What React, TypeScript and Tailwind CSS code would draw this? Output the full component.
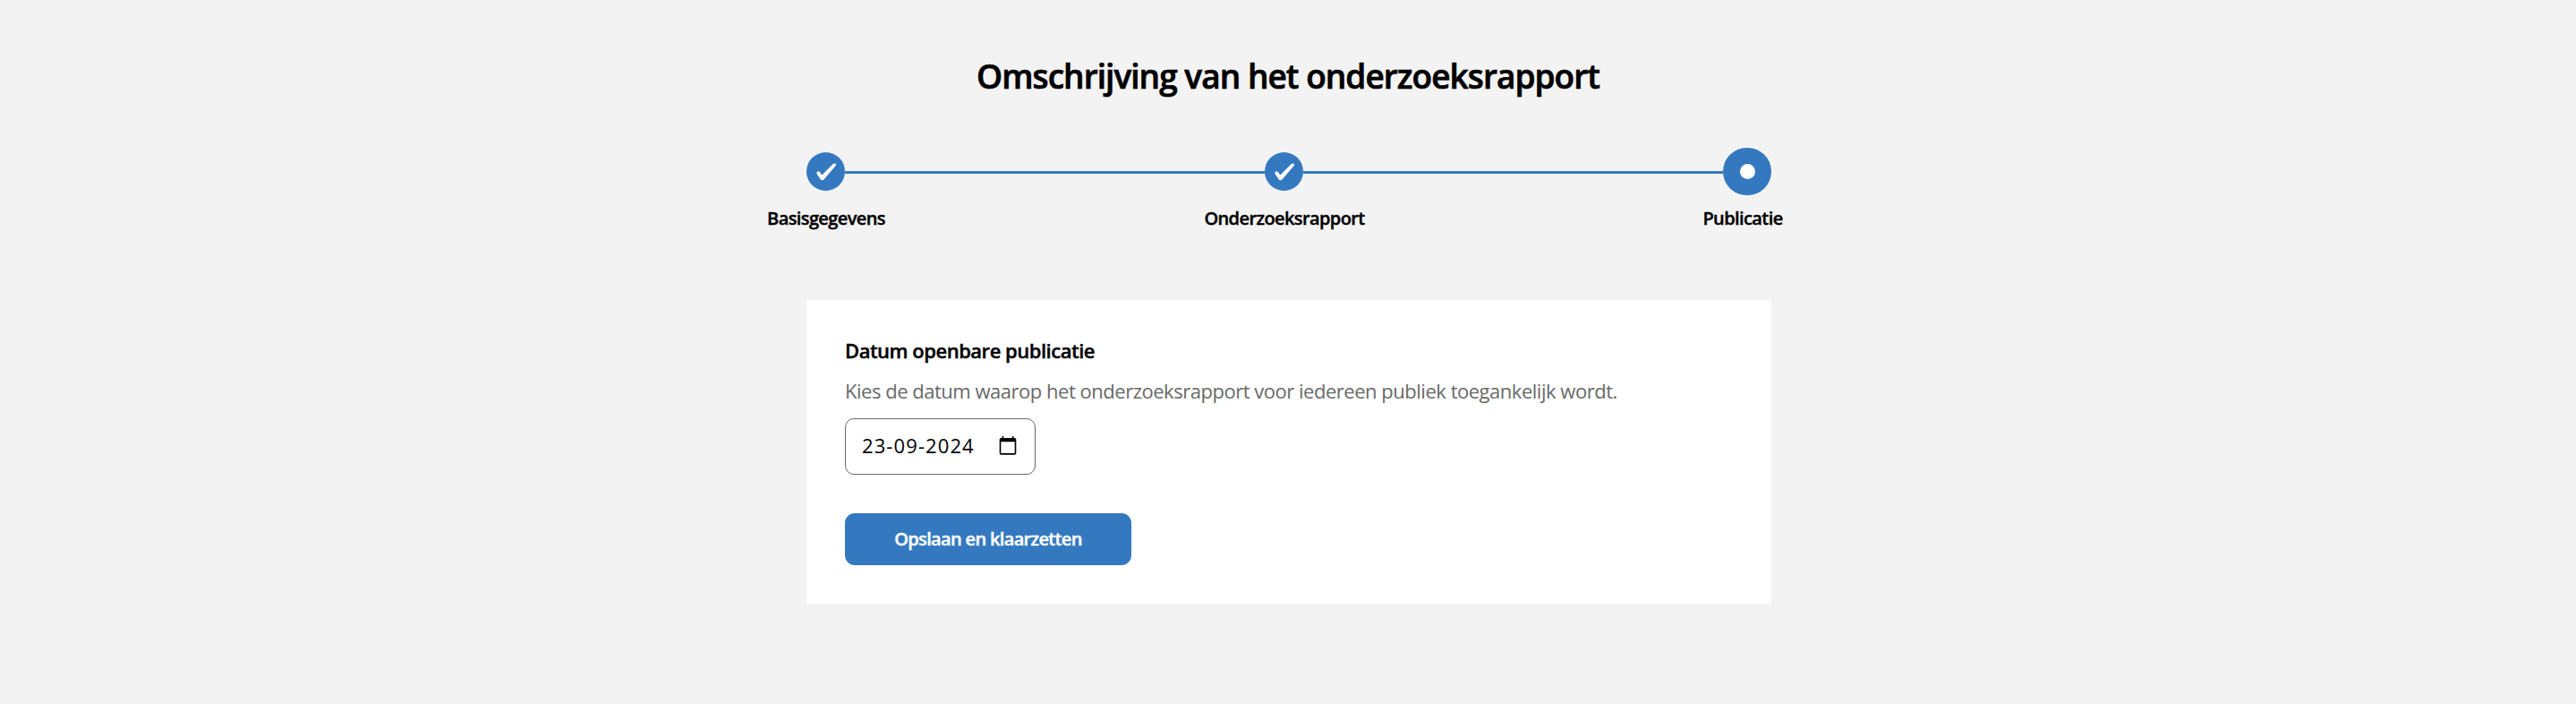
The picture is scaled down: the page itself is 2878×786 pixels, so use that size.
function Check() {
  return (
    <span className="flex h-[43px] w-[43px] shrink-0 items-center justify-center rounded-full bg-[#3479c0]">
      <svg viewBox="0 0 43 43" className="h-[43px] w-[43px]">
        <path d="M11.600 22.200Q13 20.600 14.800 22L17.300 25.500L29.800 13Q31.500 11.900 32.900 12.900Q33.500 13.800 32.400 15.200L19.600 30.200Q17.300 32.400 15.600 30.200L11.700 24.200Q11 23 11.600 22.200Z" fill="#fff" />
      </svg>
    </span>
  );
}

function Line() {
  return <span className="mt-0.5 h-[3px] flex-1 bg-[#3479c0]" />;
}

export default function App() {
  return (
    <main className="flex h-[786px] w-full flex-col items-center bg-[#f3f3f3] font-['Open_Sans',sans-serif] text-black">
      <h1 className="mt-[59px] h-[52px] text-[37px] leading-[52px] font-semibold tracking-[-0.95px] whitespace-nowrap [-webkit-text-stroke:0.7px_currentColor]">
        Omschrijving van het onderzoeksrapport
      </h1>

      <div className="mt-[54px] ml-0.5 flex h-[53px] w-[1078px] items-center">
        <Check />
        <Line />
        <Check />
        <Line />
        <span className="flex h-[53px] w-[54px] shrink-0 items-center justify-center rounded-full bg-[#3479c0]">
          <span className="h-[17px] w-[17px] rounded-full bg-white" />
        </span>
      </div>
      <ol className="mr-2 mt-3 grid w-[1536px] grid-cols-3 text-center text-[20px] leading-7 font-semibold tracking-[-0.6px] [-webkit-text-stroke:0.4px_currentColor]">
        <li>Basisgegevens</li>
        <li>Onderzoeksrapport</li>
        <li>Publicatie</li>
      </ol>

      <form className="mt-[77px] ml-0.5 flex h-[339px] w-[1078px] flex-col items-start bg-white px-[43px] pt-[41px]">
        <label className="h-[30px] text-[22px] leading-[30px] font-semibold tracking-[-0.49px] [-webkit-text-stroke:0.4px_currentColor]">
          Datum openbare publicatie
        </label>
        <p className="mt-[15px] h-[30px] text-[22px] leading-[30px] tracking-[-0.48px] whitespace-nowrap text-[#696969]">
          Kies de datum waarop het onderzoeksrapport voor iedereen publiek toegankelijk wordt.
        </p>
        <div className="mt-4 flex h-[63px] w-[213px] items-center justify-between rounded-[10px] border border-[#696969] pr-5 pl-[18px]">
          <span className="-mt-1 text-[22px] leading-[30px] tracking-[1.1px]">23-09-2024</span>
          <svg viewBox="0 0 20 21" className="-mt-0.5 h-[21px] w-5">
            <path fillRule="evenodd" d="M3.500 0h1.700v2h9.600V0h1.700v2h1a1.800 1.800 0 0 1 1.800 1.800v15.100a1.800 1.800 0 0 1-1.800 1.800H2.500a1.800 1.800 0 0 1-1.800-1.800V3.800A1.800 1.800 0 0 1 2.500 2h1zM2.300 6.200V19h15.400V6.200z" />
          </svg>
        </div>
        <button type="button" className="mt-[43px] h-[58px] w-80 rounded-[11px] bg-[#3479c0] text-[20px] leading-7 font-semibold tracking-[-0.66px] text-white [-webkit-text-stroke:0.4px_currentColor]">
          Opslaan en klaarzetten
        </button>
      </form>
    </main>
  );
}
